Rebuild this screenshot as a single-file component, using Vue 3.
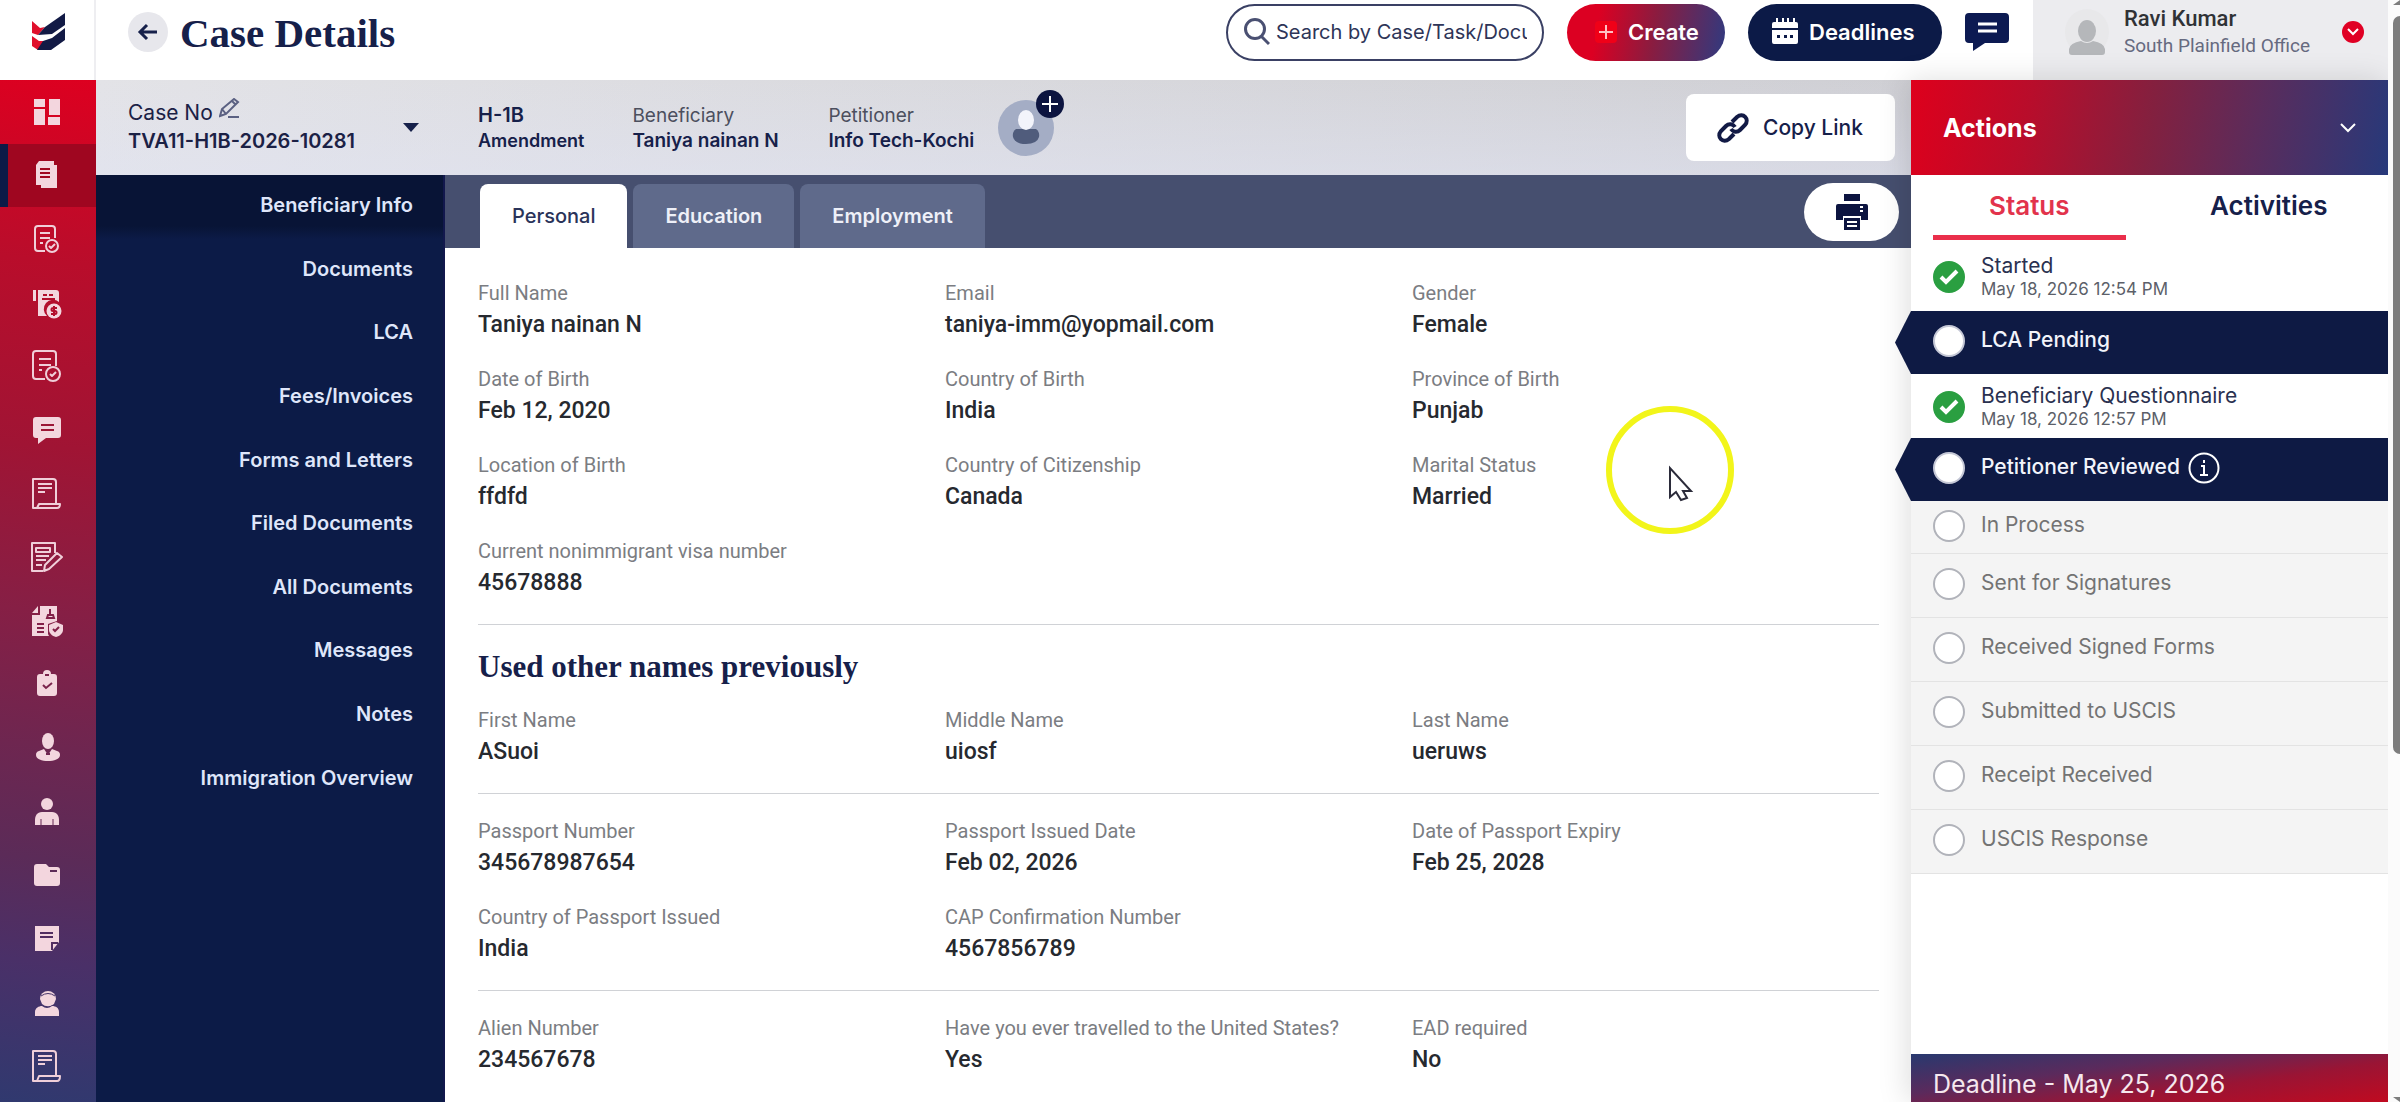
<script setup>
const railItems = [
  { name: 'Dashboard', cut: '#d40020', art: '<path d="M3 3h11v8H3zM3 13h11v16H3zM18 3h11v16H18zM17 21h12v8H17z"/>' },
  { name: 'Cases', cut: '#a00820', active: true, art: '<path d="M9 6h17v23H10v-3h13V6z" /><path d="M8 2h15v24H5V6z"/><path class="cut" d="M9 10h10M9 14h10M9 18h10"/>' },
  { name: 'Case review', cut: '#bd0c2a', art: '<g class="line"><path d="M14 28H7a3 3 0 0 1-3-3V6a3 3 0 0 1 3-3h14a3 3 0 0 1 3 3v9M9 10h10M9 15h10M9 20h3"/><circle cx="21" cy="23" r="6"/><path d="M18 23l2 2 4-4"/></g>' },
  { name: 'Invoices', cut: '#b20e2c', art: '<path d="M2 3h3v11H2zM7 3h18a3 3 0 0 1 3 3v9a9 9 0 0 0-12 14H7z"/><path class="cut" d="M12 8h4M18 8h4M11 12h13"/><circle cx="23" cy="24" r="7.500"/><path class="cut" d="M26 21h-4a1.500 1.500 0 0 0 0 3h2a1.500 1.500 0 0 1 0 3h-4M23 19v10"/>' },
  { name: 'Approvals', cut: '#a81230', art: '<g class="line"><path d="M14 29H5a3 3 0 0 1-3-3V4a3 3 0 0 1 3-3h17a3 3 0 0 1 3 3v12M8 9h12M8 15h12M8 20h3"/><circle cx="22" cy="24" r="7"/><path d="M19 24l2 2 4-4"/></g>' },
  { name: 'Messages', cut: '#9c1636', art: '<path d="M5 3h22a3 3 0 0 1 3 3v15a3 3 0 0 1-3 3H15l-8 6v-6H5a3 3 0 0 1-3-3V6a3 3 0 0 1 3-3z"/><path class="cut" d="M10 11h13M10 16h13"/>' },
  { name: 'Templates', cut: '#911a3c', art: '<g class="line"><path d="M6 30H2V1h20a3 3 0 0 1 3 3v21M7 6h14M7 10h14M7 14h7M6 30l2-4h21c0 3-1 4-3 4z"/></g>' },
  { name: 'Forms', cut: '#8c1e42', art: '<g class="line"><path d="M12 30H1V2h23v10M5 7h14v4H5zM5 15h13M5 19h10M5 24h6M13 30l1-6 12-12 5 4-13 12z"/></g>' },
  { name: 'Compliance', cut: '#822048', art: '<path d="M9 1h17v15l-9 3v10l1 2H1V10h8z"/><path d="M1 8l6-7v7z"/><path class="cut" d="M16 13h7l-1-3h-5zM19 4v5M6 19h7M6 23h7M6 27h7"/><path d="M25 17l7 3v5c0 3-3 6-7 7-4-1-7-4-7-7v-5z"/><path class="cut" d="M22 24l2 2 4-4"/>' },
  { name: 'Tasks', cut: '#7a234c', art: '<path d="M9 6h3a4 4 0 0 1 8 0h3a3 3 0 0 1 3 3v16a3 3 0 0 1-3 3H9a3 3 0 0 1-3-3V9a3 3 0 0 1 3-3z"/><path class="cut" d="M14 7h4M12 17l3 3 6-5"/>' },
  { name: 'Beneficiaries', cut: '#702650', art: '<ellipse cx="17" cy="9" rx="6" ry="8"/><path d="M13 17l4 6 4-6 5 2a4 4 0 0 1 3 4c0 4-6 6-12 6S5 27 5 23a4 4 0 0 1 3-4z"/><path class="cut" d="M15 22h4"/>' },
  { name: 'Petitioners', cut: '#662854', art: '<circle cx="16" cy="8" r="6"/><path d="M11 16h10c5 0 7 4 7 8v5H4v-5c0-4 2-8 7-8z"/><path class="cut thin" d="M10 23v6M22 23v6"/>' },
  { name: 'Folders', cut: '#5c2b58', art: '<path d="M6 5h9l3 3h8a3 3 0 0 1 3 3v13a3 3 0 0 1-3 3H6a3 3 0 0 1-3-3V8a3 3 0 0 1 3-3z"/><path class="cut" d="M19 12h7"/>' },
  { name: 'Notes', cut: '#522d60', art: '<path d="M4 3h24v16l-7 9H4z"/><path class="cut" d="M9 10h13M9 14h13M21 27v-7h6"/>' },
  { name: 'Support', cut: '#443268', art: '<path d="M9 12a8 8 0 0 1 16 0l-2 5a8 7 0 0 1-12 0z"/><path class="cut thin" d="M10 9q7-5 14 0M20 19h4"/><path d="M4 29v-4c0-4 4-6 7-6q5 4 10 0c4 0 7 2 7 6v4z"/>' },
  { name: 'Reports', cut: '#38366e', art: '<g class="line"><path d="M6 31H2V1h20a3 3 0 0 1 3 3v22M7 6h14M7 10h14M7 14h7M6 31l2-5h21c0 3-1 5-3 5z"/></g>' },
]

const caseMenu = [
  'Beneficiary Info', 'Documents', 'LCA', 'Fees/Invoices', 'Forms and Letters',
  'Filed Documents', 'All Documents', 'Messages', 'Notes', 'Immigration Overview',
]

const parties = [
  { label: 'H-1B', value: 'Amendment', kind: 'type' },
  { label: 'Beneficiary', value: 'Taniya nainan N', kind: 'person' },
  { label: 'Petitioner', value: 'Info Tech-Kochi', kind: 'firm' },
]

const tabs = ['Personal', 'Education', 'Employment']

const sections = [
  {
    fields: [
      ['Full Name', 'Taniya nainan N'], ['Email', 'taniya-imm@yopmail.com'], ['Gender', 'Female'],
      ['Date of Birth', 'Feb 12, 2020'], ['Country of Birth', 'India'], ['Province of Birth', 'Punjab'],
      ['Location of Birth', 'ffdfd'], ['Country of Citizenship', 'Canada'], ['Marital Status', 'Married'],
      ['Current nonimmigrant visa number', '45678888'],
    ],
  },
  {
    title: 'Used other names previously',
    fields: [['First Name', 'ASuoi'], ['Middle Name', 'uiosf'], ['Last Name', 'ueruws']],
  },
  {
    fields: [
      ['Passport Number', '345678987654'], ['Passport Issued Date', 'Feb 02, 2026'], ['Date of Passport Expiry', 'Feb 25, 2028'],
      ['Country of Passport Issued', 'India'], ['CAP Confirmation Number', '4567856789'],
    ],
  },
  {
    fields: [['Alien Number', '234567678'], ['Have you ever travelled to the United States?', 'Yes'], ['EAD required', 'No']],
  },
]

const steps = [
  { name: 'Started', date: 'May 18, 2026 12:54 PM', state: 'done', first: true },
  { name: 'LCA Pending', state: 'current' },
  { name: 'Beneficiary Questionnaire', date: 'May 18, 2026 12:57 PM', state: 'done' },
  { name: 'Petitioner Reviewed', state: 'current', info: true },
  { name: 'In Process', state: 'todo', first: true },
  { name: 'Sent for Signatures', state: 'todo' },
  { name: 'Received Signed Forms', state: 'todo' },
  { name: 'Submitted to USCIS', state: 'todo' },
  { name: 'Receipt Received', state: 'todo' },
  { name: 'USCIS Response', state: 'todo' },
]
</script>

<template>
  <div class="app">
    <div class="rail">
      <a class="logo" href="#" aria-label="Home">
        <svg width="36" height="40" viewBox="0 0 36 40">
          <path fill="#e0102c" d="M1 9l8 7 5-1-7 8-6-2z" />
          <path fill="#121a45" d="M7 23l7-8L34 1v12L21 22z" />
          <path fill="#e0102c" d="M1 24l7 5 5 0-6 9-6-4z" />
          <path fill="#121a45" d="M6 38l6-9 9-3 13-10v12L20 38z" />
        </svg>
      </a>
      <nav class="rail-nav" aria-label="Main">
        <a v-for="item in railItems" :key="item.name" href="#" class="rail-item" :class="{ active: item.active }" :aria-label="item.name" :style="{ '--cut': item.cut }">
          <svg width="32" height="32" viewBox="0 0 32 32" v-html="item.art"></svg>
        </a>
      </nav>
    </div>

    <div class="body">
      <header class="topbar">
        <button class="back" aria-label="Back">
          <svg width="22" height="20" viewBox="0 0 22 20"><path d="M20 10H3M10 3l-7 7 7 7" /></svg>
        </button>
        <h1>Case Details</h1>
        <div class="tools">
          <label class="search">
            <svg width="26" height="28" viewBox="0 0 26 28"><circle cx="11" cy="11" r="9.500" /><path d="M17 18l8 8" /></svg>
            <input type="text" aria-label="Search" placeholder="Search by Case/Task/Document" />
          </label>
          <button class="pill create">
            <span class="plus"><svg width="14" height="14" viewBox="0 0 14 14"><path d="M7 0v14M0 7h14" /></svg></span>Create
          </button>
          <button class="pill deadlines">
            <svg width="26" height="28" viewBox="0 0 26 28">
              <path fill="#fff" d="M4 0h2v4h4V0h2v4h3V0h2v4h4V0h2v4h1a2 2 0 0 1 2 2v4H0V6a2 2 0 0 1 2-2h2zM0 12h26v12a2 2 0 0 1-2 2H2a2 2 0 0 1-2-2z" />
              <path fill="#0c1a47" d="M5 17h3v3H5zM12 17h3v3h-3zM18 17h3v3h-3z" />
            </svg>Deadlines
          </button>
          <button class="chat" aria-label="Messages">
            <svg width="44" height="40" viewBox="0 0 44 40">
              <path fill="#0c1a52" d="M4 1h36a4 4 0 0 1 4 4v22a4 4 0 0 1-4 4H20L8 39v-8H4a4 4 0 0 1-4-4V5a4 4 0 0 1 4-4z" />
              <path stroke="#fff" stroke-width="3" d="M13 12h19M13 19h19" />
            </svg>
          </button>
        </div>
        <button class="profile">
          <span class="user-pic">
            <svg width="36" height="36" viewBox="0 0 36 36"><ellipse cx="18" cy="12" rx="9" ry="11" /><path d="M12 22q6 4 12 0 11 2 12 8v3q0 3-3 3H3q-3 0-3-3v-3q1-6 12-8z" /></svg>
          </span>
          <span class="user-text"><b>Ravi Kumar</b><span>South Plainfield Office</span></span>
          <span class="drop"><svg width="12" height="8" viewBox="0 0 12 8"><path d="M1 1l5 5 5-5" /></svg></span>
        </button>
      </header>

      <div class="content">
        <main class="case">
          <div class="casebar">
            <button class="case-pick">
              <span class="case-id">
                <span>Case No
                  <svg width="21" height="20" viewBox="0 0 21 20"><path d="M1 18l2-7L15 1l4 3L7 16zM3 11l4 5M13 3l4 4M9 19h11" /></svg>
                </span>
                <b>TVA11-H1B-2026-10281</b>
              </span>
              <svg class="caret" width="16" height="9" viewBox="0 0 16 9"><path d="M0 0h16L8 9z" /></svg>
            </button>
            <div v-for="p in parties" :key="p.label" class="party" :class="p.kind"><span>{{ p.label }}</span><b>{{ p.value }}</b></div>
            <button class="assignee" aria-label="Add assignee">
              <svg width="56" height="56" viewBox="0 0 56 56">
                <circle cx="28" cy="28" r="28" fill="#a4adc5" />
                <path fill="#505c7c" d="M18 29h20q4 3 3 8-2 7-13 7t-13-7q-1-5 3-8z" />
                <ellipse cx="28" cy="20" rx="8" ry="10" fill="#f3f4fb" />
              </svg>
              <span class="add"><svg width="16" height="16" viewBox="0 0 16 16"><path d="M8 0v16M0 8h16" /></svg></span>
            </button>
            <button class="copy">
              <svg width="32" height="30" viewBox="0 0 32 30">
                <path d="M15 9l5-5c6-5 13 2 8 8l-5 5c-3 3-7 2-9-1M17 21l-5 5c-6 5-13-2-8-8l5-5c3-3 7-2 9 1" />
              </svg>Copy Link
            </button>
          </div>

          <div class="case-body">
            <nav class="case-menu" aria-label="Case">
              <ul>
                <li v-for="(m, i) in caseMenu" :key="m" :class="{ active: i === 0 }"><a href="#">{{ m }}</a></li>
              </ul>
            </nav>
            <div class="detail">
              <div class="tabs">
                <button v-for="(t, i) in tabs" :key="t" class="tab" :class="{ active: i === 0 }">{{ t }}</button>
                <button class="print" aria-label="Print">
                  <svg width="32" height="36" viewBox="0 0 32 36">
                    <path fill="#0c1440" d="M8 0h16v7H8zM2 10h28a2 2 0 0 1 2 2v14h-7v-4H7v4H0V12a2 2 0 0 1 2-2zM8 24h16v12H8z" />
                    <path fill="none" stroke="#fff" stroke-width="2" d="M11 28h10M11 32h10M24 13h3M24 17h3" />
                  </svg>
                </button>
              </div>
              <div class="sheet">
                <section v-for="(s, i) in sections" :key="i">
                  <h2 v-if="s.title">{{ s.title }}</h2>
                  <dl>
                    <div v-for="f in s.fields" :key="f[0]"><dt>{{ f[0] }}</dt><dd>{{ f[1] }}</dd></div>
                  </dl>
                </section>
              </div>
            </div>
          </div>
        </main>

        <aside class="panel">
          <button class="actions">Actions<svg width="16" height="10" viewBox="0 0 16 10"><path d="M1 1l7 7 7-7" /></svg></button>
          <div class="panel-tabs">
            <button class="active">Status</button>
            <button>Activities</button>
          </div>
          <ol class="steps">
            <li v-for="s in steps" :key="s.name" :class="[s.state, { first: s.first }]">
              <span class="dot"><svg v-if="s.state === 'done'" width="20" height="16" viewBox="0 0 20 16"><path d="M2 8l5 5L18 2" /></svg></span>
              <span class="step-text"><span>{{ s.name }}</span><small v-if="s.date">{{ s.date }}</small></span>
              <svg v-if="s.info" class="info" width="32" height="32" viewBox="0 0 32 32"><circle cx="16" cy="16" r="14.500" /><path d="M16 8v3M13 14h3v9M12 23h8" /></svg>
            </li>
          </ol>
          <div class="deadline">Deadline - May 25, 2026</div>
        </aside>
      </div>
    </div>

    <div class="scrollbar" aria-hidden="true"><i class="up"></i><i class="thumb"></i><i class="down"></i></div>

    <svg class="pointer" width="128" height="128" viewBox="0 0 128 128" aria-hidden="true">
      <circle cx="64" cy="64" r="61" fill="none" stroke="#f2f51a" stroke-width="6" />
      <path fill="#fff" stroke="#2b2b3a" stroke-width="2" d="M64 62v29l6-5 5 8 6-2-4-7h8z" />
    </svg>
  </div>
</template>

<style>
body { margin: 0; background: #fff; overflow: hidden; }
.rail-item svg .cut { fill: none; stroke: var(--cut); stroke-width: 2; }
.rail-item svg .thin { stroke-width: 1; }
.rail-item svg .line { fill: none; stroke: #f0cfd9; stroke-width: 2; stroke-linejoin: round; }
</style>

<style scoped>
* { box-sizing: border-box; }
.app {
  position: relative;
  display: grid;
  grid-template-columns: 96px minmax(0, 1fr) 12px;
  min-height: 100vh;
  font-family: Inter, "Liberation Sans", sans-serif;
  color: #16204a;
}
button { border: 0; padding: 0; background: none; font: inherit; color: inherit; text-align: left; cursor: pointer; }
a { color: inherit; text-decoration: none; }
ul, ol, dl, dd, h1, h2 { margin: 0; padding: 0; list-style: none; }
svg { display: block; flex: none; }
b { font-weight: 600; }

.rail { display: flex; flex-direction: column; }
.logo { display: flex; align-items: center; justify-content: center; height: 80px; padding: 0 0 16px 4px; border-right: 2px solid #eeeef1; }
.rail-nav {
  flex: 1;
  display: flex;
  flex-direction: column;
  padding-bottom: 4px;
  background: linear-gradient(186deg, #dd0020, #b90d2b 18%, #a01434 36%, #861f45 52%, #6e2650 65%, #5b2b58 76%, #4a3068 86%, #30396f);
}
.rail-item { flex: 1; display: flex; align-items: center; justify-content: center; padding-right: 2px; }
.rail-item svg { fill: #f3d6de; }
.rail-item.active { background: #9f0620; border-left: 8px solid #0c1a47; padding-right: 10px; }

.body { display: flex; flex-direction: column; }
.topbar { display: flex; align-items: center; height: 80px; padding-left: 32px; }
.topbar > *:not(.profile) { margin-bottom: 16px; }
.back { display: flex; align-items: center; justify-content: center; width: 40px; height: 40px; border-radius: 50%; background: #e7e7ec; }
.back svg { fill: none; stroke: #16204a; stroke-width: 3; }
h1, h2 { font-family: "Liberation Serif", serif; font-weight: 700; color: #16204a; }
h1 { margin-left: 12px; padding-top: 2px; font-size: 41px; line-height: 48px; }
.tools { display: flex; align-items: center; gap: 23px; margin-left: auto; }
.search { display: flex; align-items: center; gap: 6px; width: 318px; height: 57px; padding: 0 15px 0 16px; border: 2px solid #3a4064; border-radius: 29px; }
.search svg { fill: none; stroke: #4a5072; stroke-width: 3; }
.search input { flex: 1; min-width: 0; border: 0; padding: 0; outline: 0; background: none; font: 20px/28px Inter, sans-serif; color: #2e3558; }
.search input::placeholder { color: #2e3558; opacity: 1; }
.pill { display: flex; align-items: center; height: 57px; border-radius: 29px; color: #fff; font-size: 22px; font-weight: 600; }
.create { gap: 11px; width: 158px; padding-left: 28px; background: linear-gradient(100deg, #dc0022 20%, #8a1c40 55%, #2f3a80); }
.plus { display: flex; align-items: center; justify-content: center; width: 22px; height: 22px; border-radius: 4px; background: #f00018; }
.plus svg { stroke: #ffc0c4; stroke-width: 2; }
.deadlines { gap: 11px; width: 194px; padding-left: 24px; background: #0c1a47; }
.profile { display: flex; align-items: center; align-self: stretch; width: 355px; margin-left: 24px; padding: 0 24px 16px 32px; background: #ececef; font-family: Roboto, sans-serif; }
.user-pic { display: flex; align-items: flex-end; justify-content: center; width: 44px; height: 46px; border-radius: 50%; background: #e8e8ea; }
.user-pic svg { fill: #b5b7ba; }
.user-text { display: flex; flex-direction: column; margin-left: 15px; }
.user-text b { font-size: 22px; line-height: 28px; font-weight: 500; color: #303236; }
.user-text span { font-size: 19px; line-height: 26px; color: #666a80; }
.drop { display: flex; align-items: center; justify-content: center; width: 22px; height: 22px; margin-left: auto; border-radius: 50%; background: #e00024; }
.drop svg, .actions svg { fill: none; stroke: #fff; stroke-width: 2; }

.content { flex: 1; display: grid; grid-template-columns: minmax(0, 1fr) 477px; }
.case { display: flex; flex-direction: column; }
.casebar { display: flex; align-items: center; height: 95px; padding: 0 16px 0 32px; background: linear-gradient(180deg, rgba(255, 255, 255, 0), rgba(225, 228, 244, .5)), linear-gradient(90deg, #e3e3e7, #cfcfd4); }
.case-pick { display: flex; align-items: center; justify-content: space-between; width: 291px; margin-right: 59px; color: #1b2145; font-size: 21px; line-height: 29px; }
.case-id { padding-bottom: 2px; }
.case-id, .party { display: flex; flex-direction: column; }
.case-id > span { display: flex; gap: 6px; }
.case-id svg { fill: none; stroke: #5b6182; stroke-width: 2; }
.case-id b { font-size: 20px; }
.caret { fill: #16204a; }
.party { min-width: 148px; margin-right: 48px; font-size: 19px; line-height: 25px; color: #4c4f5e; white-space: nowrap; }
.party b { color: #16204a; }
.party.type { min-width: 0; font-size: 18px; }
.party.type span { font-size: 20px; font-weight: 600; color: #16204a; }
.party.firm { min-width: 151px; margin-right: 19px; }
.assignee { position: relative; }
.add { position: absolute; top: -10px; right: -10px; display: flex; align-items: center; justify-content: center; width: 28px; height: 28px; border-radius: 50%; background: #0c1440; }
.add svg { stroke: #fff; stroke-width: 2; }
.copy { display: flex; align-items: center; gap: 14px; width: 209px; height: 67px; margin-left: auto; padding-left: 31px; border-radius: 8px; background: #fff; font-size: 21px; font-weight: 500; color: #16204a; }
.copy svg { fill: none; stroke: #121a45; stroke-width: 4; }

.case-body { flex: 1; display: grid; grid-template-columns: 349px minmax(0, 1fr); }
.case-menu { background: #0c1b47; border-right: 2px solid #12184d; }
.case-menu ul { display: flex; flex-direction: column; height: 636px; }
.case-menu li { flex: 1; display: flex; }
.case-menu a { flex: 1; display: flex; align-items: center; justify-content: flex-end; padding: 0 30px 3px 0; color: #dfe6fa; font-size: 20px; font-weight: 600; }
.case-menu .active { background: linear-gradient(#081436 80%, #0c1b47); }
.tabs { display: flex; align-items: flex-end; gap: 6px; height: 73px; padding: 0 12px 0 35px; background: #464f6f; }
.tab { height: 64px; padding: 0 32px; border-radius: 8px 8px 0 0; background: #5f6a8b; color: #eef0f8; font-size: 20px; font-weight: 600; }
.tab.active { background: #fff; color: #2a3359; font-weight: 500; }
.print { display: flex; align-items: center; justify-content: center; align-self: center; width: 95px; height: 58px; margin-left: auto; border-radius: 29px; background: #fff; }
.sheet { padding: 8px 32px 0 33px; font-family: Roboto, sans-serif; }
section { padding: 22px 0 24px; border-bottom: 1px solid #d0d2d6; }
section:last-child { padding-bottom: 20px; border-bottom: 0; }
h2 { margin-bottom: 18px; font-size: 31px; line-height: 40px; }
dl { display: grid; grid-template-columns: repeat(3, minmax(0, 1fr)); row-gap: 22px; }
dt { font-size: 20px; line-height: 30px; color: #7b7d82; }
dd { font-size: 23px; line-height: 34px; font-weight: 500; color: #26292f; }

.panel { display: flex; flex-direction: column; background: #fff; box-shadow: -4px 0 28px rgba(0, 0, 0, .13); }
.actions { display: flex; align-items: center; justify-content: space-between; height: 95px; padding: 0 32px; background: linear-gradient(100deg, #de001c, #b80d2b 25%, #83203f 50%, #5a2c5c 72%, #27397a); color: #fff; font-size: 25px; font-weight: 700; }
.panel-tabs { display: grid; grid-template-columns: 1fr 1fr; height: 65px; }
.panel-tabs button { padding-top: 2px; text-align: center; font-size: 26px; line-height: 56px; font-weight: 600; border-bottom: 5px solid transparent; }
.panel-tabs .active { margin-left: 22px; margin-right: 24px; border-color: #ea2f4b; color: #e2334c; }
.steps li { position: relative; display: flex; align-items: center; height: 64px; padding: 0 0 3px 22px; font-size: 21px; }
.dot { display: flex; align-items: center; justify-content: center; width: 32px; height: 32px; margin-right: 16px; border: 2px solid #b1b3ba; border-radius: 50%; background: #fff; }
.step-text { display: flex; flex-direction: column; padding-bottom: 2px; line-height: 24px; }
.steps small { font-size: 17px; line-height: 22px; color: #5c5f69; }
.steps .done { padding-top: 1px; padding-bottom: 0; color: #2a3150; }
.done .step-text { padding-bottom: 0; }
.steps .done.first { height: 71px; padding-top: 3px; }
.done .dot { border-color: #2a9f41; background: #2a9f41; }
.done .dot svg { fill: none; stroke: #fff; stroke-width: 4; }
.steps .current { height: 63px; background: #0e1a44; color: #f2f4fb; font-weight: 500; }
.current::before { content: ""; position: absolute; top: 0; right: 100%; width: 16px; height: 100%; background: #0e1a44; clip-path: polygon(100% 0, 0 50%, 100% 100%); }
.current .dot { border-color: #c5c8d6; }
.info { margin-left: 8px; fill: none; stroke: #fff; stroke-width: 2; }
.steps .todo { background: #f4f4f4; border-bottom: 1px solid #e3e3e3; color: #737373; }
.steps .todo.first { height: 53px; }
.deadline { height: 48px; margin-top: auto; padding: 13px 22px 0; background: linear-gradient(172deg, #28396f, #5b2a5c 35%, #9a1434 65%, #c00a20); color: #f6e8ee; font-size: 25px; line-height: 34px; white-space: nowrap; overflow: hidden; }

.scrollbar { display: flex; flex-direction: column; align-items: flex-end; background: #fbfbfb; }
.scrollbar i { width: 7px; background: #7d7d7d; }
.up, .down { height: 5px; clip-path: polygon(100% 0, 0 100%, 100% 100%); }
.scrollbar .down { margin-top: auto; clip-path: polygon(0 0, 100% 0, 100% 100%); }
.thumb { flex: 0 0 67%; margin-top: 11px; border-radius: 7px 0 0 7px; }

.pointer { position: absolute; top: 406px; right: 666px; pointer-events: none; }
</style>
